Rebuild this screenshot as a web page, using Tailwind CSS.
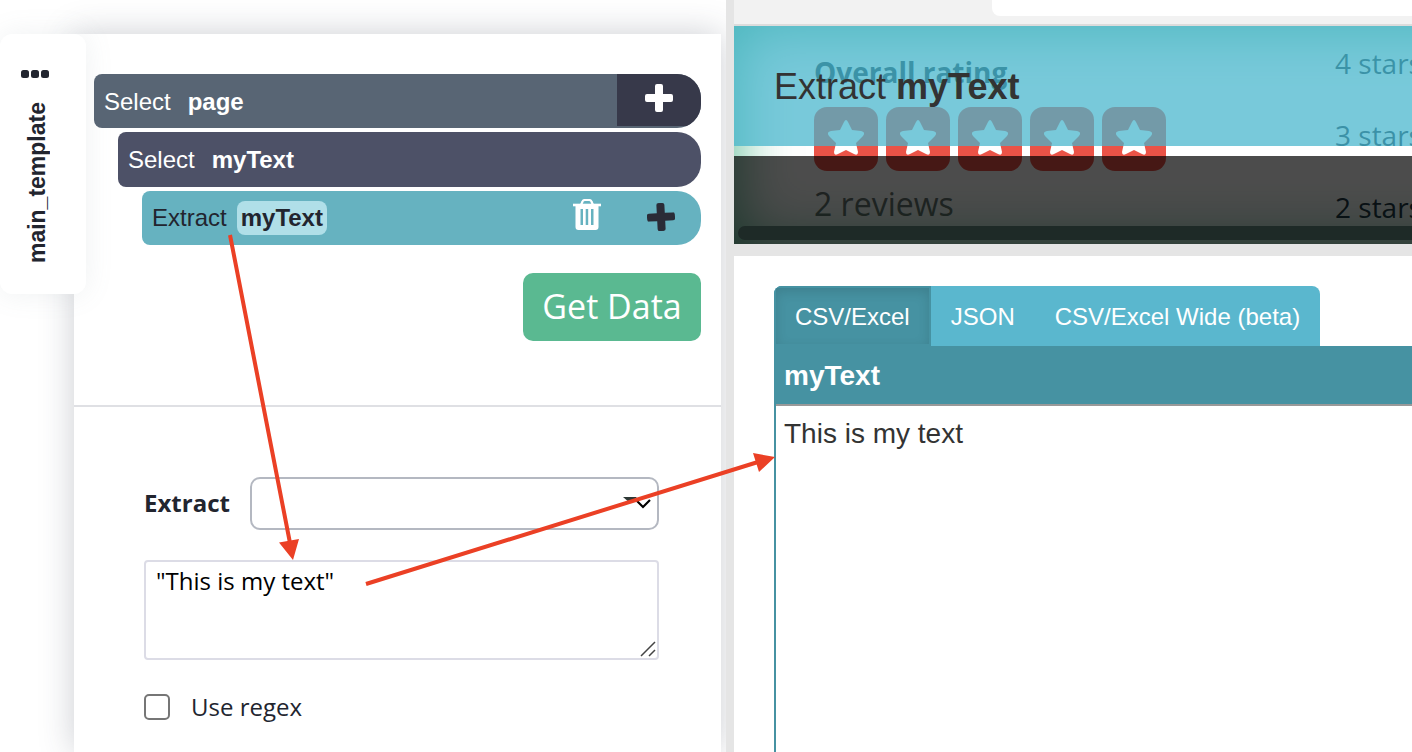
<!DOCTYPE html>
<html lang="en">
  <head>
    <meta charset="UTF-8" />
    <meta name="viewport" content="width=device-width, initial-scale=1.0" />
    <title>main_template</title>
    <script src="https://cdn.jsdelivr.net/npm/@tailwindcss/browser@4"></script>
  </head>
  <body class="relative grid h-screen grid-cols-[726fr_8px_678fr] overflow-hidden bg-white font-['Liberation_Sans',sans-serif] text-2xl text-[#22252f]">
    <!-- Template editor -->
    <section class="flex min-w-0 overflow-hidden pt-[34px] pr-[5px]">
      <div class="relative z-10 w-[74px] shrink-0">
        <!-- Template tab -->
        <div class="flex h-[260px] w-[86px] flex-col items-center gap-6 rounded-xl bg-white pt-9 pr-4 shadow-[0_0_28px_rgba(120,140,150,0.12)]">
          <button aria-label="Template options">
            <svg class="h-2 w-7" viewBox="0 0 28 8" fill="#22252f">
              <rect width="8" height="8" rx="2.500" />
              <rect x="10" width="8" height="8" rx="2.500" />
              <rect x="20" width="8" height="8" rx="2.500" />
            </svg>
          </button>
          <span class="ml-1 rotate-180 text-[23px] font-bold leading-7 [writing-mode:vertical-rl]">main_template</span>
        </div>
      </div>

      <div class="min-w-0 flex-1 bg-white shadow-[0_0_32px_rgba(50,60,80,0.25)]">
        <!-- Commands -->
        <div class="relative z-20 flex flex-col gap-1 border-b-2 border-[#dfe0e4] px-5 pt-10 pb-16">
          <div class="flex h-[54px] items-start overflow-hidden rounded-l-lg rounded-r-3xl bg-[#586574] text-white">
            <div class="flex h-full flex-1 items-center gap-[17px] pt-px pl-[10px]">
              <span>Select</span>
              <b>page</b>
            </div>
            <button aria-label="Add command" class="flex h-[52px] w-[84px] items-center justify-center bg-[#37394a] pb-1">
              <svg class="h-7 w-7" viewBox="0 0 28 28" fill="#fff">
                <path d="M12 0h4q2 0 2 2v8h8q2 0 2 2v4q0 2-2 2h-8v8q0 2-2 2h-4q-2 0-2-2v-8H2q-2 0-2-2v-4q0-2 2-2h8V2q0-2 2-2z" />
              </svg>
            </button>
          </div>
          <div class="ml-6 flex h-[55px] items-center gap-[17px] rounded-l-lg rounded-r-3xl bg-[#4d5167] pl-[10px] text-white">
            <span>Select</span>
            <b>myText</b>
          </div>
          <div class="ml-12 flex h-[54px] items-center rounded-l-lg rounded-r-3xl bg-[#66b2c0] pr-[26px] pl-[10px]">
            <span>Extract</span>
            <b class="ml-[10px] rounded-lg bg-[#b0dfe8] px-1 leading-[34px]">myText</b>
            <button aria-label="Delete" class="mr-[46px] ml-auto pb-[6px]">
              <svg class="h-8 w-7" viewBox="0 0 28 32" fill="none" stroke="#fff">
                <path d="M0 6h28" stroke-width="2.600" />
                <path d="M8 6l1.500-3.500Q10 1 12 1h4q2 0 2.500 1.500L20 6" stroke-width="2.200" />
                <path fill="#fff" fill-rule="evenodd" stroke="none" d="M2.500 6h23v22q0 3-3 3h-17q-3 0-3-3zM7.500 10v16h2.500V10zM12.700 10v16h2.500V10zM18 10v16h2.500V10z" />
              </svg>
            </button>
            <button aria-label="Add command" class="pb-[2px]">
              <svg class="h-7 w-7 -rotate-3" viewBox="0 0 28 28" fill="#2a2c37">
                <path d="M12 0h4q2 0 2 2v8h8q2 0 2 2v4q0 2-2 2h-8v8q0 2-2 2h-4q-2 0-2-2v-8H2q-2 0-2-2v-4q0-2 2-2h8V2q0-2 2-2z" />
              </svg>
            </button>
          </div>
          <button class="mt-6 h-[68px] w-[178px] self-end rounded-[10px] bg-[#5ab991] font-['Open_Sans',sans-serif] text-[34px] text-white">Get Data</button>
        </div>

        <!-- Command settings -->
        <form class="flex flex-col pt-[70px] pr-[62px] pl-[70px] font-['Open_Sans',sans-serif]">
          <div class="flex items-center gap-5">
            <label for="command" class="pb-[2px] font-bold">Extract</label>
            <div class="relative min-w-0 flex-1">
              <select id="command" class="h-[53px] w-full appearance-none rounded-[10px] border-2 border-[#b4b8c1] bg-white"></select>
              <svg class="pointer-events-none absolute top-5 right-1 h-4 w-8" viewBox="0 0 32 16">
                <path d="M0 0h14L7 6z" fill="#2e3836" />
                <path d="M13 3l7 7 7-7" fill="none" stroke="#000" stroke-width="2.200" />
              </svg>
            </div>
          </div>
          <div class="relative mt-[30px] flex">
            <textarea aria-label="Expression" class="h-[100px] w-full resize-none rounded border-2 border-[#dcdce6] px-[10px] py-[3px] leading-8 text-black">"This is my text"</textarea>
            <svg class="pointer-events-none absolute right-[3px] bottom-[3px] h-4 w-4" viewBox="0 0 16 16" stroke="#444" stroke-width="1.500">
              <path d="M1 15L15 1M9 15l6-6" />
            </svg>
          </div>
          <label class="mt-[31px] flex items-center gap-[21px]">
            <input type="checkbox" class="h-[26px] w-[26px] appearance-none rounded-[5px] border-2 border-[#767676] bg-white" />
            Use regex
          </label>
        </form>
      </div>
    </section>

    <div class="bg-[#e5e5e5]"></div>

    <!-- Page preview and results -->
    <section class="flex min-w-0 flex-col overflow-hidden">
      <div class="flex h-[26px] items-start justify-end overflow-hidden border-b-2 border-[#dcdcdc] bg-[#f2f2f2]">
        <input aria-label="Address" class="h-4 w-[420px] rounded-bl-lg bg-white" />
      </div>

      <div class="relative h-[218px] overflow-hidden bg-white font-['Open_Sans',sans-serif] text-[28px]">
        <div class="flex justify-between pl-20">
          <div class="pt-[27px]">
            <p class="font-bold leading-[38px] text-[#234]">Overall rating</p>
            <div class="mt-4 flex gap-2">
              <svg class="h-16 w-16" viewBox="0 0 64 64"><rect width="64" height="64" rx="13" fill="#eb5347" /><path id="star" d="M30 15q2-4 4 0l4 8 9 1q5 1 2 5l-7 7 2 9q0 4-4 2l-8-4-8 4q-4 2-4-2l2-9-7-7q-3-4 2-5l9-1z" fill="#fff" /></svg>
              <svg class="h-16 w-16" viewBox="0 0 64 64"><rect width="64" height="64" rx="13" fill="#eb5347" /><use href="#star" /></svg>
              <svg class="h-16 w-16" viewBox="0 0 64 64"><rect width="64" height="64" rx="13" fill="#eb5347" /><use href="#star" /></svg>
              <svg class="h-16 w-16" viewBox="0 0 64 64"><rect width="64" height="64" rx="13" fill="#eb5347" /><use href="#star" /></svg>
              <svg class="h-16 w-16" viewBox="0 0 64 64"><rect width="64" height="64" rx="13" fill="#eb5347" /><use href="#star" /></svg>
            </div>
            <p class="mt-2 text-[32px] leading-[50px] text-[#697370]">2 reviews</p>
          </div>
          <div class="w-[77px] pt-px leading-[72px] whitespace-nowrap text-[#234]">
            <p>4 stars</p>
            <p>3 stars</p>
            <p>2 stars</p>
          </div>
        </div>
        <!-- Edge glow, dimmed remainder, scrollbar and command title -->
        <div class="absolute inset-y-0 -right-20 left-0 shadow-[inset_0_0_60px_rgba(0,150,90,0.7)]"></div>
        <div class="absolute inset-x-0 top-[130px] bottom-0 bg-black/70"></div>
        <div class="absolute right-0 bottom-1 left-1 h-[14px] rounded-l-full bg-[#1e2a27]"></div>
        <div class="absolute inset-x-0 top-0 h-[120px] bg-[#46b5cc]/73 pt-10 pl-10 font-['Liberation_Sans',sans-serif] text-4xl leading-[42px] text-[#333]">Extract <b>myText</b></div>
      </div>

      <div class="h-3 bg-[#e5e5e5]"></div>

      <!-- Results -->
      <div class="flex flex-1 flex-col pt-[30px] pl-10">
        <div class="flex h-[60px] self-start overflow-hidden rounded-t-lg bg-[#5ab7ce] text-white">
          <button class="border-2 border-[#4692a2] bg-[#4692a2] px-[19px] pt-[2px] shadow-[inset_0_4px_12px_rgba(0,0,0,0.12)]">CSV/Excel</button>
          <button class="px-5 pt-[2px]">JSON</button>
          <button class="px-5 pt-[2px]">CSV/Excel Wide (beta)</button>
        </div>
        <div class="flex-1 border-l-2 border-[#4692a2]">
          <table class="w-full border-collapse text-left text-[28px] text-[#333]">
            <thead>
              <tr class="h-[59px] border-b-2 border-[#999] bg-[#4692a2] text-white">
                <th class="px-2 pt-[2px]">myText</th>
              </tr>
            </thead>
            <tbody>
              <tr class="h-[57px]">
                <td class="px-2">This is my text</td>
              </tr>
            </tbody>
          </table>
        </div>
      </div>
    </section>

    <!-- Annotation arrows -->
    <svg class="pointer-events-none absolute top-0 left-0 z-30 h-[752px] w-[1412px]" viewBox="0 0 1412 752" fill="#eb4025" stroke="#eb4025">
      <path d="M230 235L290 543M366 584L758 462" stroke-width="4" />
      <path d="M279 542.500l20-3.500-6 21zM753 453l22 4-16 15z" stroke="none" />
    </svg>
  </body>
</html>
